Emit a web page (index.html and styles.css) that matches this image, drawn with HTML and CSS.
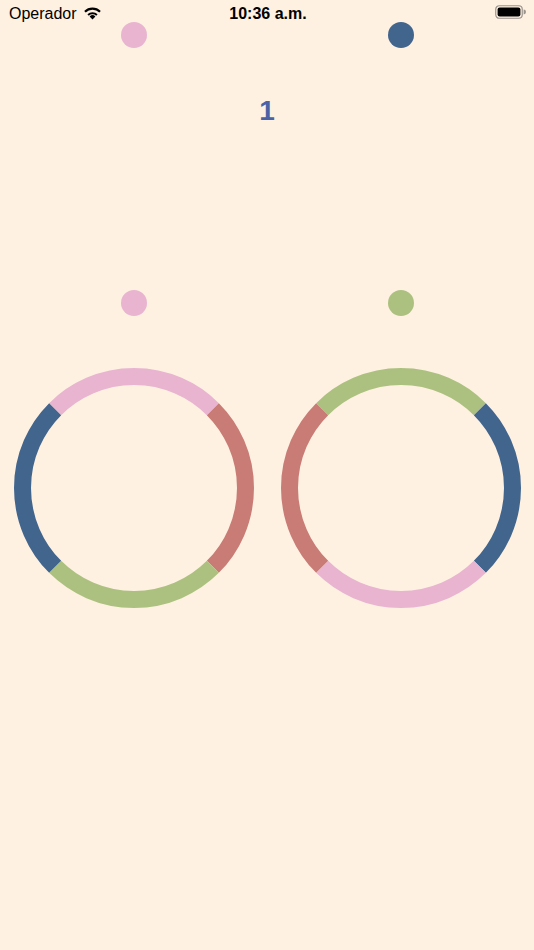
FILE: index.html
```html
<!DOCTYPE html>
<html lang="es">
<head>
<meta charset="utf-8">
<title>Color Switch</title>
<link rel="stylesheet" href="styles.css">
</head>
<body>
<div class="screen">
  <div class="status">
    <div class="status-left">
      <span class="carrier">Operador</span>
      <svg class="wifi" width="19" height="14" viewBox="0 0 19 14">
        <path d="M9.5 13.6 L6.6 10.4 A4.2 4.2 0 0 1 12.4 10.4 Z" fill="#000"/>
        <path d="M4.4 8.2 A7.4 7.4 0 0 1 14.6 8.2 L13.2 9.7 A5.4 5.4 0 0 0 5.8 9.7 Z" fill="#000"/>
        <path d="M1.2 4.9 A11.8 11.8 0 0 1 17.8 4.9 L16.3 6.5 A9.6 9.6 0 0 0 2.7 6.5 Z" fill="#000"/>
      </svg>
    </div>
    <div class="time">10:36 a.m.</div>
    <div class="status-right">
      <svg class="battery" width="31" height="14" viewBox="0 0 31 14">
        <rect x="0.75" y="0.75" width="26.5" height="12.5" rx="3.5" fill="none" stroke="#9a948d" stroke-width="1.2"/>
        <rect x="2.6" y="2.6" width="22.8" height="8.8" rx="2" fill="#000"/>
        <path d="M28.6 4.6 A2.4 2.4 0 0 1 28.6 9.4 Z" fill="#9a948d"/>
      </svg>
    </div>
  </div>

  <div class="pair dots-top">
    <div class="dot pink"></div>
    <div class="dot blue"></div>
  </div>

  <div class="score">1</div>

  <div class="pair dots-mid">
    <div class="dot pink"></div>
    <div class="dot green"></div>
  </div>

  <div class="pair rings">
    <svg class="ring" width="240" height="240" viewBox="0 0 240 240">
      <path class="seg s-pink" d="M41.16 41.16 A111.5 111.5 0 0 1 198.84 41.16"/>
      <path class="seg s-red" d="M198.84 41.16 A111.5 111.5 0 0 1 198.84 198.84"/>
      <path class="seg s-green" d="M198.84 198.84 A111.5 111.5 0 0 1 41.16 198.84"/>
      <path class="seg s-blue" d="M41.16 198.84 A111.5 111.5 0 0 1 41.16 41.16"/>
    </svg>
    <svg class="ring" width="240" height="240" viewBox="0 0 240 240">
      <path class="seg s-green" d="M41.16 41.16 A111.5 111.5 0 0 1 198.84 41.16"/>
      <path class="seg s-blue" d="M198.84 41.16 A111.5 111.5 0 0 1 198.84 198.84"/>
      <path class="seg s-pink" d="M198.84 198.84 A111.5 111.5 0 0 1 41.16 198.84"/>
      <path class="seg s-red" d="M41.16 198.84 A111.5 111.5 0 0 1 41.16 41.16"/>
    </svg>
  </div>
</div>
</body>
</html>
```

FILE: styles.css
```css
html, body {
  margin: 0;
  padding: 0;
  background: #fef1e2;
}

.screen {
  width: 534px;
  height: 950px;
  background: #fef1e2;
  font-family: "Liberation Sans", Arial, sans-serif;
  overflow: hidden;
}

.status {
  height: 22px;
  display: grid;
  grid-template-columns: 1fr auto 1fr;
  align-items: start;
  padding: 0 8px 0 9px;
  box-sizing: border-box;
}

.status-left {
  display: flex;
  align-items: flex-start;
  gap: 6px;
  padding-top: 6px;
}

.carrier {
  font-size: 16px;
  line-height: 16px;
  color: #000;
}

.wifi {
  margin-top: 0px;
}

.time {
  font-size: 16px;
  line-height: 16px;
  font-weight: 600;
  color: #000;
  padding-top: 6px;
  padding-left: 1px;
}

.status-right {
  display: flex;
  justify-content: flex-end;
  padding-top: 5px;
}

.pair {
  display: grid;
  grid-template-columns: 267px 267px;
  justify-items: center;
  align-items: center;
}

.dots-top {
  height: 26px;
}

.dot {
  width: 26px;
  height: 26px;
  border-radius: 50%;
}

.pink { background: #e8b4d0; }
.blue { background: #42658d; }
.green { background: #acc17f; }

.score {
  margin-top: 49px;
  height: 28px;
  font-size: 28px;
  line-height: 28px;
  font-weight: 700;
  color: #4a62a6;
  text-align: center;
}

.dots-mid {
  margin-top: 165px;
  height: 26px;
}

.rings {
  margin-top: 52px;
}

.ring {
  display: block;
}

.seg {
  fill: none;
  stroke-width: 17;
  stroke-linecap: butt;
}

.s-pink { stroke: #e8b4d0; }
.s-red { stroke: #c97c75; }
.s-green { stroke: #acc17f; }
.s-blue { stroke: #42658d; }
```
